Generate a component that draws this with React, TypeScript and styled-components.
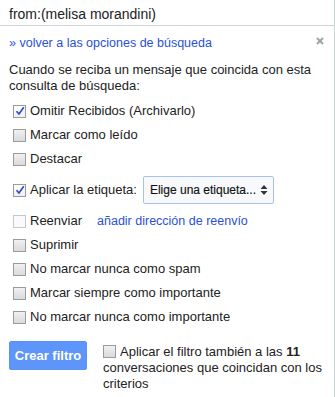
import React from "react";
import styled, { createGlobalStyle } from "styled-components";

const Global = createGlobalStyle`
  html, body { margin: 0; padding: 0; background: #fff; }
  body { font-family: "Liberation Sans", Arial, sans-serif; font-size: 13px; color: #222; }
`;

const Frame = styled.div`
  width: 335px;
  height: 397px;
  box-sizing: border-box;
  border-right: 1px solid #cdd6d6;
  display: flex;
  flex-direction: column;
`;

const SearchBar = styled.div`
  height: 26px;
  box-sizing: border-box;
  border-bottom: 1px solid #cdd6d6;
  padding: 6px 9px 0;
  line-height: 16px;
  font-size: 14px;
  color: #222;
`;

const Panel = styled.div`
  position: relative;
  padding: 9px 9px 0;
  display: flex;
  flex-direction: column;
`;

const Close = styled.button`
  position: absolute;
  top: 10px;
  right: 10px;
  width: 9px;
  height: 9px;
  padding: 0;
  border: 0;
  background: none;
  display: flex;
  align-items: center;
  justify-content: center;
`;

const Link = styled.a<{ $size?: number }>`
  color: #2b50d9;
  text-decoration: none;
  line-height: 16px;
  font-size: ${(p) => p.$size ?? 13}px;
  cursor: pointer;
`;

const Description = styled.div`
  margin-top: 11px;
  line-height: 16px;
`;

const Options = styled.div`
  margin-top: 5px;
  display: flex;
  flex-direction: column;
`;

const Row = styled.label<{ $tall?: boolean }>`
  display: flex;
  align-items: center;
  height: ${(p) => (p.$tall ? 38 : 24)}px;
  line-height: 16px;
`;

const Box = styled.span<{ $disabled?: boolean }>`
  box-sizing: border-box;
  width: 13px;
  height: 13px;
  margin: 0 4px 0 4px;
  flex: none;
  border: 1px solid ${(p) => (p.$disabled ? "#c8c8c8" : "#9a9a9a")};
  background: ${(p) =>
    p.$disabled ? "#fafafa" : "linear-gradient(#f2f2f2, #e2e2e2 60%, #dcdcdc)"};
  display: inline-flex;
  align-items: center;
  justify-content: center;
`;

const CheckedBox = styled(Box)`
  background: linear-gradient(#ffffff, #f0f0f0);
`;

const Checkbox = ({ checked, disabled }: { checked?: boolean; disabled?: boolean }) =>
  checked ? (
    <CheckedBox>
      <svg width="10" height="10" viewBox="0 0 10 10">
        <path d="M1.5 5.2 L4 8 L8.8 1.2" fill="none" stroke="#2f49c8" strokeWidth="1.7" />
      </svg>
    </CheckedBox>
  ) : (
    <Box $disabled={disabled} />
  );

const Select = styled.div`
  margin-left: 6px;
  width: 131px;
  height: 28px;
  box-sizing: border-box;
  border: 1px solid #a9c2ea;
  border-radius: 2px;
  background: #f7f9fc;
  display: flex;
  align-items: center;
  justify-content: space-between;
  padding: 0 5px 0 6px;
  font-size: 12px;
  color: #111;
  -webkit-text-stroke: 0.15px #111;
`;

const ForwardLink = styled(Link)`
  margin-left: 15px;
`;

const Footer = styled.div`
  margin-top: 12px;
  display: flex;
  align-items: flex-start;
  gap: 16px;
`;

const CreateButton = styled.button`
  width: 78px;
  height: 29px;
  flex: none;
  border: 1px solid #5b93f5;
  border-radius: 2px;
  background: #5d95fb;
  color: #fff;
  font-family: "Liberation Sans", Arial, sans-serif;
  font-size: 13px;
  font-weight: bold;
  padding: 0;
`;

const ApplyText = styled.div`
  width: 222px;
  padding-top: 3px;
  line-height: 16px;
`;

const InlineBox = styled(Box)`
  margin: 0 4px 0 0;
  vertical-align: -2px;
`;

const options: { text: string; checked?: boolean }[] = [
  { text: "Suprimir" },
  { text: "No marcar nunca como spam" },
  { text: "Marcar siempre como importante" },
  { text: "No marcar nunca como importante" },
];

export default function App() {
  return (
    <>
      <Global />
      <Frame>
        <SearchBar>from:(melisa morandini)</SearchBar>
        <Panel>
          <Close aria-label="Cerrar">
            <svg width="8" height="8" viewBox="0 0 8 8">
              <path d="M1 1 L7 7 M7 1 L1 7" stroke="#9aa5a5" strokeWidth="2" />
            </svg>
          </Close>
          <Link $size={12.5}>» volver a las opciones de búsqueda</Link>
          <Description>
            Cuando se reciba un mensaje que coincida con esta consulta de búsqueda:
          </Description>
          <Options>
            <Row>
              <Checkbox checked />
              Omitir Recibidos (Archivarlo)
            </Row>
            <Row>
              <Checkbox />
              Marcar como leído
            </Row>
            <Row>
              <Checkbox />
              Destacar
            </Row>
            <Row $tall>
              <Checkbox checked />
              Aplicar la etiqueta:
              <Select>
                Elige una etiqueta...
                <svg width="8" height="12" viewBox="0 0 8 12">
                  <path d="M4 1 L7.5 5 H0.5 Z M4 11 L7.5 7 H0.5 Z" fill="#333" />
                </svg>
              </Select>
            </Row>
            <Row>
              <Checkbox disabled />
              Reenviar
              <ForwardLink $size={12.5}>añadir dirección de reenvío</ForwardLink>
            </Row>
            {options.map((o) => (
              <Row key={o.text}>
                <Checkbox checked={o.checked} />
                {o.text}
              </Row>
            ))}
          </Options>
          <Footer>
            <CreateButton>Crear filtro</CreateButton>
            <ApplyText>
              <InlineBox />
              Aplicar el filtro también a las <b>11</b> conversaciones que coincidan con los
              criterios
            </ApplyText>
          </Footer>
        </Panel>
      </Frame>
    </>
  );
}
